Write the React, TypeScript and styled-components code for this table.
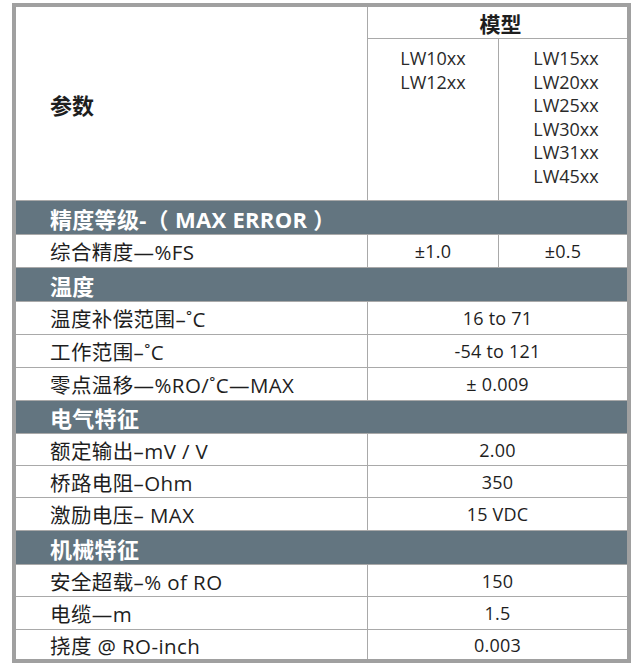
import React from "react";
import styled, { createGlobalStyle } from "styled-components";

const GlobalStyle = createGlobalStyle`
  html, body {
    margin: 0;
    padding: 0;
    background: #ffffff;
  }
  body {
    font-family: "Open Sans", "Noto Sans CJK SC", sans-serif;
    color: #1e1e1e;
  }
`;

const Sheet = styled.div`
  background-color: #a9a9a9;
  border: 4px solid #a0a0a0;
  display: grid;
  gap: 1px;
  grid-template-columns: 351px 130px 128px;
  grid-template-rows: 31px 161px 33px 32px 33px 32px 32px 32px 32px 31px 31px 32px 33px 31px 32px 29px;
  margin: 3px 0 0 12px;
  width: 611px;
`;

const Cell = styled.div`
  align-items: center;
  background-color: #ffffff;
  display: flex;
  overflow: hidden;
  white-space: nowrap;
`;

const ParamHead = styled(Cell)`
  font-size: 22px;
  font-weight: 700;
  grid-row: span 2;
  padding-left: 34px;
`;

const ModelHead = styled(Cell)`
  font-size: 21px;
  font-weight: 700;
  grid-column: span 2;
  justify-content: center;
  padding-left: 6px;
`;

const ModelList = styled(Cell)<{ $shift?: number }>`
  align-items: center;
  color: #2a2a2a;
  flex-direction: column;
  font-size: 18px;
  justify-content: flex-start;
  line-height: 23.6px;
  padding: 8px 0 0 ${(p) => p.$shift ?? 0}px;
`;

const Band = styled(Cell)`
  background-color: #637580;
  color: #ffffff;
  font-size: 22px;
  font-weight: 700;
  grid-column: 1 / -1;
  letter-spacing: 0.3px;
  padding-left: 34px;
`;

const Label = styled(Cell)`
  font-size: 20.5px;
  letter-spacing: 0.4px;
  padding-left: 34px;
`;

const Value = styled(Cell)<{ $wide?: boolean }>`
  font-size: 18px;
  grid-column: ${(p) => (p.$wide ? "span 2" : "auto")};
  justify-content: center;
  letter-spacing: 0.2px;
`;

type Row =
  | { band: string }
  | { label: string; values: string[] };

const rows: Row[] = [
  { band: "精度等级-（ MAX ERROR ）" },
  { label: "综合精度—%FS", values: ["±1.0", "±0.5"] },
  { band: "温度" },
  { label: "温度补偿范围–˚C", values: ["16 to 71"] },
  { label: "工作范围–˚C", values: ["-54 to 121"] },
  { label: "零点温移—%RO/˚C—MAX", values: ["± 0.009"] },
  { band: "电气特征" },
  { label: "额定输出–mV / V", values: ["2.00"] },
  { label: "桥路电阻–Ohm", values: ["350"] },
  { label: "激励电压– MAX", values: ["15 VDC"] },
  { band: "机械特征" },
  { label: "安全超载–% of RO", values: ["150"] },
  { label: "电缆—m", values: ["1.5"] },
  { label: "挠度 @ RO-inch", values: ["0.003"] },
];

function App() {
  return (
    <>
      <GlobalStyle />
      <Sheet>
        <ParamHead>参数</ParamHead>
        <ModelHead>模型</ModelHead>
        <ModelList>
          <span>LW10xx</span>
          <span>LW12xx</span>
        </ModelList>
        <ModelList $shift={6}>
          <span>LW15xx</span>
          <span>LW20xx</span>
          <span>LW25xx</span>
          <span>LW30xx</span>
          <span>LW31xx</span>
          <span>LW45xx</span>
        </ModelList>
        {rows.map((row, i) =>
          "band" in row ? (
            <Band key={i}>{row.band}</Band>
          ) : (
            <React.Fragment key={i}>
              <Label>{row.label}</Label>
              {row.values.map((v) => (
                <Value key={v} $wide={row.values.length === 1}>
                  {v}
                </Value>
              ))}
            </React.Fragment>
          )
        )}
      </Sheet>
    </>
  );
}

export default App;
